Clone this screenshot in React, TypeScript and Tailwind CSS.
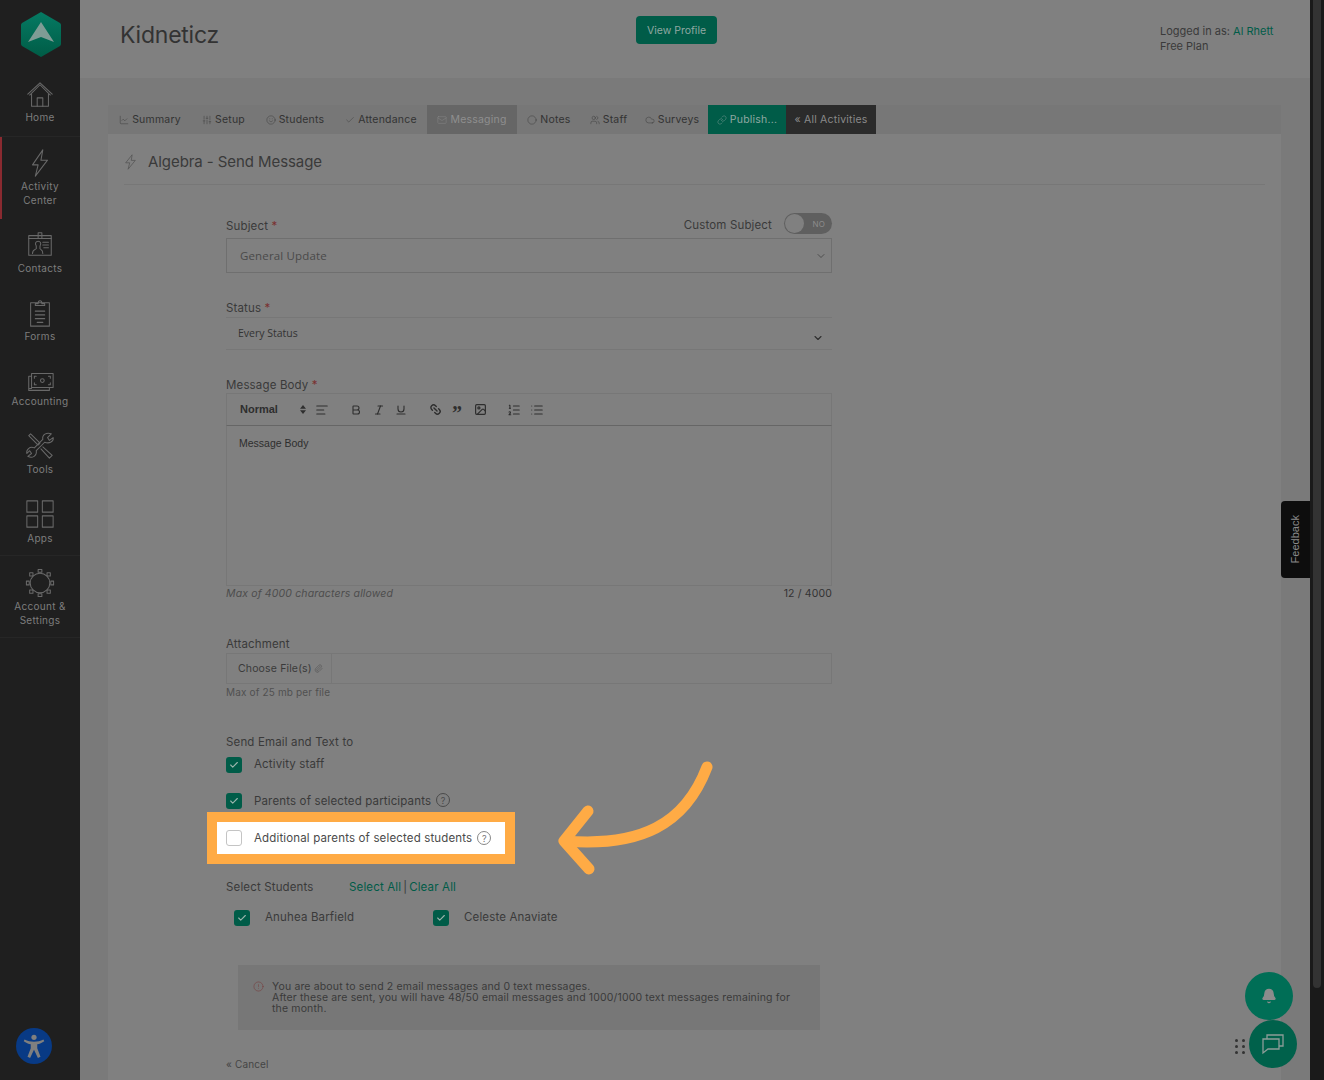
import type { ReactNode } from 'react';
import {
  AlignLeft,
  Bell,
  Bold,
  Check,
  ChevronDown,
  Circle,
  Cloud,
  Image,
  Italic,
  Link,
  Link2,
  List,
  ListOrdered,
  Mail,
  SlidersVertical,
  Smile,
  Underline,
  Users,
  ChartLine,
  CircleAlert,
  Paperclip,
} from 'lucide-react';

function NavIcon({ children }: { children: ReactNode }) {
  return (
    <svg viewBox="0 0 32 32" className="h-[30px] w-[30px]" fill="none" stroke="#696969" strokeWidth="1.1" strokeLinejoin="round" strokeLinecap="round">
      {children}
    </svg>
  );
}

const navItems: { label: string[]; h: string; pt: string; mt: string; active?: boolean; line?: boolean; icon: ReactNode }[] = [
  {
    label: ['Home'],
    h: 'h-[62px]',
    pt: 'pt-[6px]',
    mt: '-mt-[1px]',
    line: true,
    icon: (
      <>
        <path d="M5 15 L16 4 L27 15" />
        <path d="M3 14 L16 2 L29 14" />
        <path d="M7 14 V27 H25 V14" />
        <path d="M13 27 V18 H19 V27" />
      </>
    ),
  },
  {
    label: ['Activity', 'Center'],
    h: 'h-[82px]',
    pt: 'pt-[6px]',
    mt: 'mt-[1px]',
    active: true,
    icon: <path d="M19 2 L8 18 H14 L11 30 L24 13 H17 Z" />,
  },
  {
    label: ['Contacts'],
    h: 'h-[68px]',
    pt: 'pt-[11px]',
    mt: 'mt-[1px]',
    icon: (
      <>
        <rect x="4" y="6" width="24" height="21" />
        <rect x="14" y="3" width="4" height="6" />
        <path d="M4 9 H28" />
        <path d="M8 25 C8 21 11 21 12 20 V17 C10 14 12 12 14 12 C16 12 18 14 16 17 V20 C17 21 19 21 19 25" />
        <path d="M19 13 H25 M19 16 H25 M20 19 H25" />
      </>
    ),
  },
  {
    label: ['Forms'],
    h: 'h-[68px]',
    pt: 'pt-[11px]',
    mt: 'mt-[1px]',
    icon: (
      <>
        <rect x="6" y="5" width="20" height="25" />
        <path d="M11 8 V6 H14 C14 2 18 2 18 6 H21 V8 Z" />
        <path d="M11 14 H21 M11 18 H21 M11 22 H21 M13 26 H19" />
      </>
    ),
  },
  {
    label: ['Accounting'],
    h: 'h-[65px]',
    pt: 'pt-[11px]',
    mt: '-mt-[2px]',
    icon: (
      <>
        <rect x="7" y="8" width="23" height="15" />
        <path d="M7 11 H4 V26 H26 V23 M5 24 H7" />
        <circle cx="18.5" cy="15.5" r="2" />
        <path d="M10 13 V11 H12 M27 13 V11 H25 M10 18 V20 H12 M27 18 V20 H25" />
      </>
    ),
  },
  {
    label: ['Tools'],
    h: 'h-[68px]',
    pt: 'pt-[11px]',
    mt: 'mt-[1px]',
    icon: (
      <>
        <path d="M4 5 L6 3 L16 13 L14 15 Z" />
        <path d="M19 17 L29 26 L26 29 L17 19" />
        <path d="M21 12 L12 21 C13 26 8 30 3 27 L7 24 L5 21 L2 24 C1 20 5 16 10 18 L19 9 C18 4 23 1 28 3 L24 7 L26 10 L30 7 C31 11 26 14 21 12 Z" />
      </>
    ),
  },
  {
    label: ['Apps'],
    h: 'h-[68px]',
    pt: 'pt-[11px]',
    mt: 'mt-[2px]',
    line: true,
    icon: (
      <>
        <rect x="2" y="2" width="11.5" height="12" />
        <rect x="18.5" y="2" width="11.5" height="12" />
        <rect x="2" y="18" width="11.5" height="12" />
        <rect x="18.5" y="18" width="11.5" height="12" />
      </>
    ),
  },
  {
    label: ['Account &', 'Settings'],
    h: 'h-[82px]',
    pt: 'pt-[12px]',
    mt: 'mt-[1px]',
    line: true,
    icon: (
      <>
        <circle cx="16" cy="16" r="10.5" />
        <rect x="14" y="1.5" width="4" height="3" />
        <rect x="14" y="27.5" width="4" height="3" />
        <rect x="1.5" y="14" width="3" height="4" />
        <rect x="27.5" y="14" width="3" height="4" />
        <rect x="5" y="5" width="3.5" height="3.5" />
        <rect x="23.5" y="5" width="3.5" height="3.5" />
        <rect x="5" y="23.5" width="3.5" height="3.5" />
        <rect x="23.5" y="23.5" width="3.5" height="3.5" />
      </>
    ),
  },
];

function Sidebar() {
  return (
    <aside className="flex h-full w-[80px] shrink-0 flex-col bg-[#1f1f1f]">
      <div className="flex h-[75px] shrink-0 items-start justify-center pl-[2px] pt-[12px]">
        <svg viewBox="0 0 40 45" className="h-[45px] w-[40px]">
          <defs>
            <linearGradient id="hex" x1="0" y1="0" x2="0" y2="1">
              <stop offset="0" stopColor="#057a63" />
              <stop offset="1" stopColor="#005c46" />
            </linearGradient>
          </defs>
          <path d="M20 0 L39 11 Q40 12 40 13 V32 Q40 33 39 34 L20 45 L1 34 Q0 33 0 32 V13 Q0 12 1 11 Z" fill="url(#hex)" />
          <path d="M20 10 L33 30 L20 25 L7 30 Z" fill="#7f9c95" />
        </svg>
      </div>
      {navItems.map((item) => (
        <div
          key={item.label[0]}
          className={`flex shrink-0 flex-col items-center ${item.h} ${item.pt} ${item.line ? 'border-b border-[#262626]' : ''} ${item.active ? 'border-l-2 border-[#8a2a30]' : ''}`}
        >
          <div className={item.active ? 'mt-[5px] -ml-[2px]' : ''}>
            <NavIcon>{item.icon}</NavIcon>
          </div>
          <div className={`text-center text-[10px] leading-[14px] tracking-[0.03em] text-[#7d7d7d] ${item.mt} ${item.active ? '-ml-[2px]' : ''}`}>
            {item.label.map((line) => (
              <div key={line}>{line}</div>
            ))}
          </div>
        </div>
      ))}
      <div className="mt-auto flex justify-center pb-[16px] pr-[12px]">
        <div className="flex h-[36px] w-[36px] items-center justify-center rounded-full bg-[#083a85]">
          <svg viewBox="0 0 24 24" className="h-[26px] w-[26px]" fill="#7f7f7f">
            <circle cx="12" cy="4" r="2.4" />
            <path d="M2.5 7.5 L3.3 6 C6 7.5 9 8 12 8 C15 8 18 7.5 20.7 6 L21.5 7.5 C19.5 9 17 10 15 10.4 L15 14 L18 22 L15.6 23 L12 15.5 L8.4 23 L6 22 L9 14 L9 10.4 C7 10 4.5 9 2.5 7.5 Z" />
          </svg>
        </div>
      </div>
    </aside>
  );
}

const tabs: { label: string; w: string; cls: string; icon?: ReactNode }[] = [
  { label: 'Summary', w: 'w-[84px]', cls: 'text-[#333]', icon: <ChartLine size={10} strokeWidth={1} /> },
  { label: 'Setup', w: 'w-[63px]', cls: 'text-[#333]', icon: <SlidersVertical size={10} strokeWidth={1} /> },
  { label: 'Students', w: 'w-[80px]', cls: 'text-[#333]', icon: <Smile size={10} strokeWidth={1} /> },
  { label: 'Attendance', w: 'w-[92px]', cls: 'text-[#333]', icon: <Check size={10} strokeWidth={1} /> },
  { label: 'Messaging', w: 'w-[90px]', cls: 'bg-[#666666] text-[#8f8f8f]', icon: <Mail size={10} strokeWidth={1} /> },
  { label: 'Notes', w: 'w-[64px]', cls: 'text-[#333]', icon: <Circle size={10} strokeWidth={1} /> },
  { label: 'Staff', w: 'w-[55px]', cls: 'text-[#333]', icon: <Users size={10} strokeWidth={1} /> },
  { label: 'Surveys', w: 'w-[72px]', cls: 'text-[#333]', icon: <Cloud size={10} strokeWidth={1} /> },
  { label: 'Publish...', w: 'w-[78px]', cls: 'bg-[#005c48] text-[#8fa8a2]', icon: <Link size={10} strokeWidth={1} /> },
  { label: '« All Activities', w: 'w-[90px]', cls: 'bg-[#2b2b2b] text-[#8a8a8a]' },
];

function Tick({ checked = true }: { checked?: boolean }) {
  if (!checked) {
    return <span className="block h-[16px] w-[16px] shrink-0 rounded-[3px] border border-[#c4c4c4] bg-white" />;
  }
  return (
    <span className="flex h-[16px] w-[16px] shrink-0 items-center justify-center rounded-[3px] bg-[#005c48]">
      <Check size={10} strokeWidth={2.6} color="#9cb5ae" />
    </span>
  );
}

function Help({ dark }: { dark?: boolean }) {
  return (
    <span className={`flex h-[14px] w-[14px] items-center justify-center rounded-full border text-[9px] leading-none ${dark ? 'border-[#4a4a4a] text-[#4a4a4a]' : 'border-[#888] text-[#777]'}`}>
      ?
    </span>
  );
}

function Form() {
  return (
    <div className="ml-[118px] mt-[25px] w-[606px] text-[11.5px] tracking-[0.013em] text-[#3a3a3a]">
      <div className="flex h-[28px] items-end justify-between pb-[5px]">
        <span className="leading-[14px]">
          Subject <span className="text-[#7a3030]">*</span>
        </span>
        <div className="flex items-center gap-[12px]">
          <span className="leading-[14px]">Custom Subject</span>
          <div className="-mb-[1px] -mt-[4px] flex h-[21px] w-[48px] items-center justify-between rounded-full bg-[#5f5f5f] pl-[1px] pr-[7px]">
            <span className="h-[19px] w-[19px] rounded-full bg-[#808080]" />
            <span className="text-[8px] text-[#8c8c8c]">NO</span>
          </div>
        </div>
      </div>
      <div className="flex h-[35px] items-center justify-between border border-[#6f6f6f] pl-[13px] pr-[4px] font-['Open_Sans',sans-serif] text-[11.5px] text-[#4a4a4a]">
        General Update
        <ChevronDown size={12} strokeWidth={1.3} color="#333" />
      </div>

      <div className="mt-[28px] h-[16px] leading-[14px]">
        Status <span className="text-[#7a3030]">*</span>
      </div>
      <div className="flex h-[33px] items-center justify-between border-y border-[#777] pl-[12px] pr-[8px] font-['Open_Sans',sans-serif] text-[10.5px] tracking-normal text-[#333]">
        <span>Every Status</span>
        <ChevronDown size={12} strokeWidth={2.2} color="#2e2e2e" className="mt-[8px]" />
      </div>

      <div className="mt-[28px] h-[15px] leading-[14px]">
        Message Body <span className="text-[#7a3030]">*</span>
      </div>
      <div className="flex h-[33px] items-center border border-[#777] border-b-[#666] pl-[13px] text-[#2e2e2e]">
        <span className="w-[60px] font-['Liberation_Sans',sans-serif] text-[11px] font-bold tracking-normal">Normal</span>
        <svg viewBox="0 0 8 12" className="h-[9px] w-[6px]" fill="#2e2e2e">
          <path d="M4 0 L8 5 H0 Z M4 12 L0 7 H8 Z" />
        </svg>
        <AlignLeft size={14} strokeWidth={1.8} className="ml-[9px]" />
        <Bold size={12} strokeWidth={2.2} className="ml-[21px]" />
        <Italic size={12} strokeWidth={2.2} className="ml-[11px]" />
        <Underline size={12} strokeWidth={2.2} className="ml-[10px]" />
        <Link2 size={13} strokeWidth={2.6} className="ml-[22px] rotate-45" />
        <span className="ml-[10px] h-[20px] font-['Liberation_Serif',serif] text-[20px] font-bold leading-[26px] tracking-normal">”</span>
        <Image size={13} strokeWidth={2.2} className="ml-[12px]" />
        <ListOrdered size={14} strokeWidth={1.8} className="ml-[20px]" />
        <List size={14} strokeWidth={1.8} className="ml-[9px]" />
      </div>
      <div className="h-[160px] border-x border-b border-[#777] pl-[12px] pt-[10px] font-['Liberation_Sans',sans-serif] text-[10.5px] leading-[14px] tracking-normal text-[#2e2e2e]">
        Message Body
      </div>
      <div className="flex h-[16px] items-center justify-between text-[10.5px] text-[#4d4d4d]">
        <span className="italic">Max of 4000 characters allowed</span>
        <span className="text-[#333]">12 / 4000</span>
      </div>

      <div className="mt-[35px] h-[16px] leading-[14px]">Attachment</div>
      <div className="flex h-[31px] border border-[#777]">
        <div className="flex w-[105px] items-center gap-[2px] border-r border-[#777] pl-[11px] text-[10.5px]">
          Choose File(s)
          <Paperclip size={9} strokeWidth={1} />
        </div>
      </div>
      <div className="mt-[1px] h-[14px] text-[10px] leading-[14px] text-[#505050]">Max of 25 mb per file</div>

      <div className="mt-[36px] h-[16px] leading-[14px]">Send Email and Text to</div>
      <div className="flex h-[20px] items-start">
        <div className="mt-[6px]">
          <Tick />
        </div>
        <span className="ml-[12px] mt-[6px] leading-[14px]">Activity staff</span>
      </div>
      <div className="mt-[16px] flex h-[20px] items-start">
        <div className="mt-[6px]">
          <Tick />
        </div>
        <span className="ml-[12px] mt-[7px] leading-[14px]">Parents of selected participants</span>
        <span className="ml-[5px] mt-[6px]">
          <Help dark />
        </span>
      </div>
      <div className="-ml-[19px] mt-[5px] flex h-[52px] w-[308px] items-center border-[10px] border-[#ffab45] bg-white pl-[9px] text-[#4a4a4a]">
        <Tick checked={false} />
        <span className="ml-[12px] mt-[1px]">Additional parents of selected students</span>
        <span className="ml-[5px]">
          <Help />
        </span>
      </div>

      <div className="mt-[16px] flex h-[14px] items-center leading-[14px]">
        <span className="w-[123px]">Select Students</span>
        <span className="text-[#005c48]">Select All</span>
        <span className="mx-[2px]">|</span>
        <span className="text-[#005c48]">Clear All</span>
      </div>
      <div className="ml-[8px] mt-[15px] flex h-[17px] items-center">
        <Tick />
        <span className="ml-[15px] w-[168px]">Anuhea Barfield</span>
        <Tick />
        <span className="ml-[15px]">Celeste Anaviate</span>
      </div>

      <div className="ml-[12px] mt-[39px] flex h-[65px] w-[582px] bg-[#777777] pl-[15px] pr-[16px] pt-[16px] text-[10.5px] leading-[11px] text-[#3a3a3a]">
        <CircleAlert size={11} strokeWidth={1} color="#7a3030" className="shrink-0" />
        <p className="ml-[8px]">
          You are about to send 2 email messages and 0 text messages.
          <br />
          After these are sent, you will have 48/50 email messages and 1000/1000 text messages remaining for the month.
        </p>
      </div>
      <div className="mt-[27px] text-[10px] leading-[14px] text-[#454545]">« Cancel</div>
    </div>
  );
}

export default function App() {
  return (
    <div className="relative flex h-[1080px] w-[1324px] overflow-hidden bg-[#7a7a7a] font-['Inter',sans-serif]">
      <Sidebar />
      <main className="flex h-full w-[1230px] shrink-0 flex-col">
        <header className="flex h-[78px] shrink-0 bg-[#808080]">
          <h1 className="ml-[40px] mt-[19px] w-[516px] text-[23px] leading-[32px] tracking-[-0.01em] text-[#333]">Kidneticz</h1>
          <div className="mt-[16px] flex h-[28px] w-[81px] items-center justify-center rounded-[4px] bg-[#005c48] pt-[1px] text-[10.5px] text-[#8fa8a2]">
            View Profile
          </div>
          <div className="ml-[443px] mt-[24px] text-[11px] leading-[15px] text-[#3a3a3a]">
            <div>
              Logged in as: <span className="text-[#005c48]">Al Rhett</span>
            </div>
            <div>Free Plan</div>
          </div>
        </header>

        <div className="ml-[28px] mt-[27px] flex h-[29px] w-[1173px] shrink-0 bg-[#777777]">
          {tabs.map((tab) => (
            <div key={tab.label} className={`flex items-center justify-center gap-[3px] whitespace-nowrap text-[10.5px] tracking-[0.02em] ${tab.w} ${tab.cls}`}>
              {tab.icon}
              {tab.label}
            </div>
          ))}
        </div>

        <div className="ml-[28px] w-[1173px] flex-1 bg-[#808080]">
          <div className="mx-[16px] flex h-[51px] items-center border-b border-[#777] pt-[5px] text-[#3a3a3a]">
            <svg viewBox="0 0 16 20" className="h-[16px] w-[13px]" fill="none" stroke="#555" strokeWidth="1">
              <path d="M10 1 L2 11 H7 L5 19 L14 8 H9 Z" />
            </svg>
            <span className="ml-[11px] text-[15px] leading-[20px] tracking-[-0.005em]">Algebra - Send Message</span>
          </div>
          <Form />
        </div>
      </main>

      <div className="w-[14px] shrink-0 bg-[#1a1a1a]">
        <div className="mx-auto h-[988px] w-[8px] rounded-b-full bg-[#333333]" />
      </div>

      {/* Floating items over the page */}
      <div className="absolute left-[1281px] top-[501px] flex h-[77px] w-[29px] items-center justify-center rounded-l-[4px] bg-[#0d0d0d]">
        <span className="-rotate-90 font-['Liberation_Sans',sans-serif] text-[11px] text-[#8a8a8a]">Feedback</span>
      </div>
      <div className="absolute left-[1245px] top-[972px] flex h-[48px] w-[48px] items-center justify-center rounded-full bg-[#006e56]">
        <Bell size={16} fill="#8c8c8c" color="#8c8c8c" />
      </div>
      <div className="absolute left-[1249px] top-[1020px] flex h-[48px] w-[48px] items-center justify-center rounded-full bg-[#00614b]">
        <svg viewBox="0 0 24 24" className="h-[24px] w-[24px]" fill="none" stroke="#8c9c98" strokeWidth="1.3">
          <path d="M2 7 H18 V17 H7 L2 21 Z" />
          <path d="M6 7 V3 H22 V14 H18" />
        </svg>
      </div>
      <div className="absolute left-[1235px] top-[1039px] grid grid-cols-2 gap-x-[4px] gap-y-[3px]">
        {[0, 1, 2, 3, 4, 5].map((dot) => (
          <span key={dot} className="h-[3px] w-[3px] rounded-full bg-[#333]" />
        ))}
      </div>
      <svg className="absolute left-[550px] top-[755px] h-[125px] w-[170px]" viewBox="0 0 170 125" fill="none" stroke="#ffab45" strokeWidth="11" strokeLinecap="round" strokeLinejoin="round">
        <path d="M157 12 C135 70 90 92 15 86" />
        <path d="M38 56 L14 86 L39 114" />
      </svg>
    </div>
  );
}
